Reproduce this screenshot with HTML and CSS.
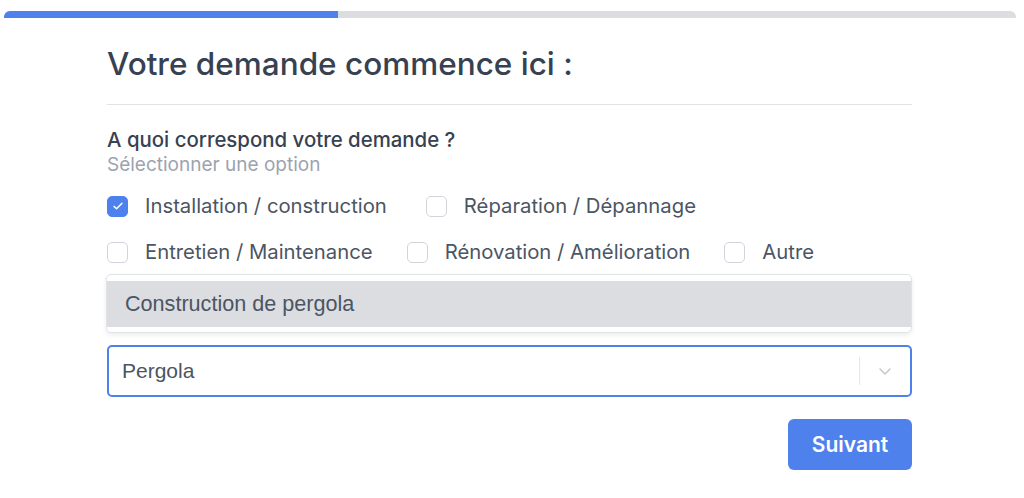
FILE: index.html
```html
<!DOCTYPE html>
<html lang="fr">
<head>
<meta charset="utf-8">
<link rel="stylesheet" href="styles.css">
</head>
<body>
<div class="progress"><div class="progress-fill" style="width:33%"></div></div>
<main class="form">
  <h1 class="title">Votre demande commence ici :</h1>
  <hr class="rule">
  <div class="question">A quoi correspond votre demande ?</div>
  <div class="hint">Sélectionner une option</div>
  <div class="options wide">
    <label class="opt"><span class="box checked"><svg viewBox="0 0 20 20" width="16" height="16"><path d="M5 10.5l3.2 3L15 6.5" fill="none" stroke="#fff" stroke-width="1.8" stroke-linecap="round" stroke-linejoin="round"/></svg></span>Installation / construction</label>
    <label class="opt"><span class="box"></span>Réparation / Dépannage</label>
  </div>
  <div class="options">
    <label class="opt"><span class="box"></span>Entretien / Maintenance</label>
    <label class="opt"><span class="box"></span>Rénovation / Amélioration</label>
    <label class="opt"><span class="box"></span>Autre</label>
  </div>
  <div class="menu">
    <div class="menu-item">Construction de pergola</div>
  </div>
  <div class="select">
    <span class="select-value">Pergola</span>
    <span class="select-sep"></span>
    <span class="select-arrow"><svg viewBox="0 0 20 20" width="20" height="20"><path d="M5 8l5 5 5-5" fill="none" stroke="#c6c9ce" stroke-width="1.6" stroke-linecap="round" stroke-linejoin="round"/></svg></span>
  </div>
  <div class="actions"><button class="btn">Suivant</button></div>
</main>
</body>
</html>
```
FILE: styles.css
```css
* { box-sizing: border-box; }
html, body { margin: 0; padding: 0; background: #fff; }
body { font-family: Inter, "Noto Sans", sans-serif; color: #374151; padding-top: 11px; }
.progress { margin: 0 8px 0 4px; height: 7px; background: #dcdde1; border-radius: 6px 6px 0 0; overflow: hidden; }
.progress-fill { height: 100%; background: #4f81ed; }
.form { width: 805px; margin: 0 0 0 107px; }
.title { font-size: 31.5px; font-weight: 500; margin: 27px 0 0; line-height: 38px; color: #374151; }
.rule { border: 0; border-top: 1px solid #e2e3e6; margin: 21px 0 0; }
.question { font-size: 20.4px; font-weight: 500; margin-top: 22px; line-height: 26px; }
.hint { font-size: 19px; color: #9ca3af; line-height: 24px; }
.options { display: flex; gap: 34px; margin-top: 17px; }
.options.wide { gap: 39px; }
.options + .options { margin-top: 22px; }
.opt { display: flex; align-items: center; gap: 17px; font-size: 20.3px; line-height: 24px; color: #4b5563; }
.box { width: 21px; height: 21px; border: 1px solid #d1d5db; border-radius: 5px; display: flex; align-items: center; justify-content: center; }
.box.checked { background: #4f81ed; border-color: #4f81ed; }
.menu { margin-top: 10px; margin-left: -1px; border: 1px solid #e2e3e6; border-radius: 5px; padding: 6px 0 5px; box-shadow: 0 2px 5px rgba(0,0,0,0.08); }
.menu-item { background: #dcdde1; height: 46px; display: flex; align-items: center; padding-left: 18px; font-family: "Liberation Sans", Arial, sans-serif; font-size: 21.6px; color: #4b5563; }
.select { margin-top: 12px; height: 52px; border: 2px solid #4f81ed; border-radius: 5px; display: flex; align-items: center; }
.select-value { flex: 1; padding-left: 13px; font-family: "Liberation Sans", Arial, sans-serif; font-size: 21px; color: #4b5563; }
.select-sep { width: 1px; height: 28px; background: #e5e7eb; }
.select-arrow { width: 50px; display: flex; justify-content: center; }
.actions { display: flex; justify-content: flex-end; margin-top: 22px; }
.btn { background: #4f81ed; color: #fff; border: 0; border-radius: 6px; width: 124px; height: 51px; font-family: Inter, sans-serif; font-size: 21px; font-weight: 600; }
```
